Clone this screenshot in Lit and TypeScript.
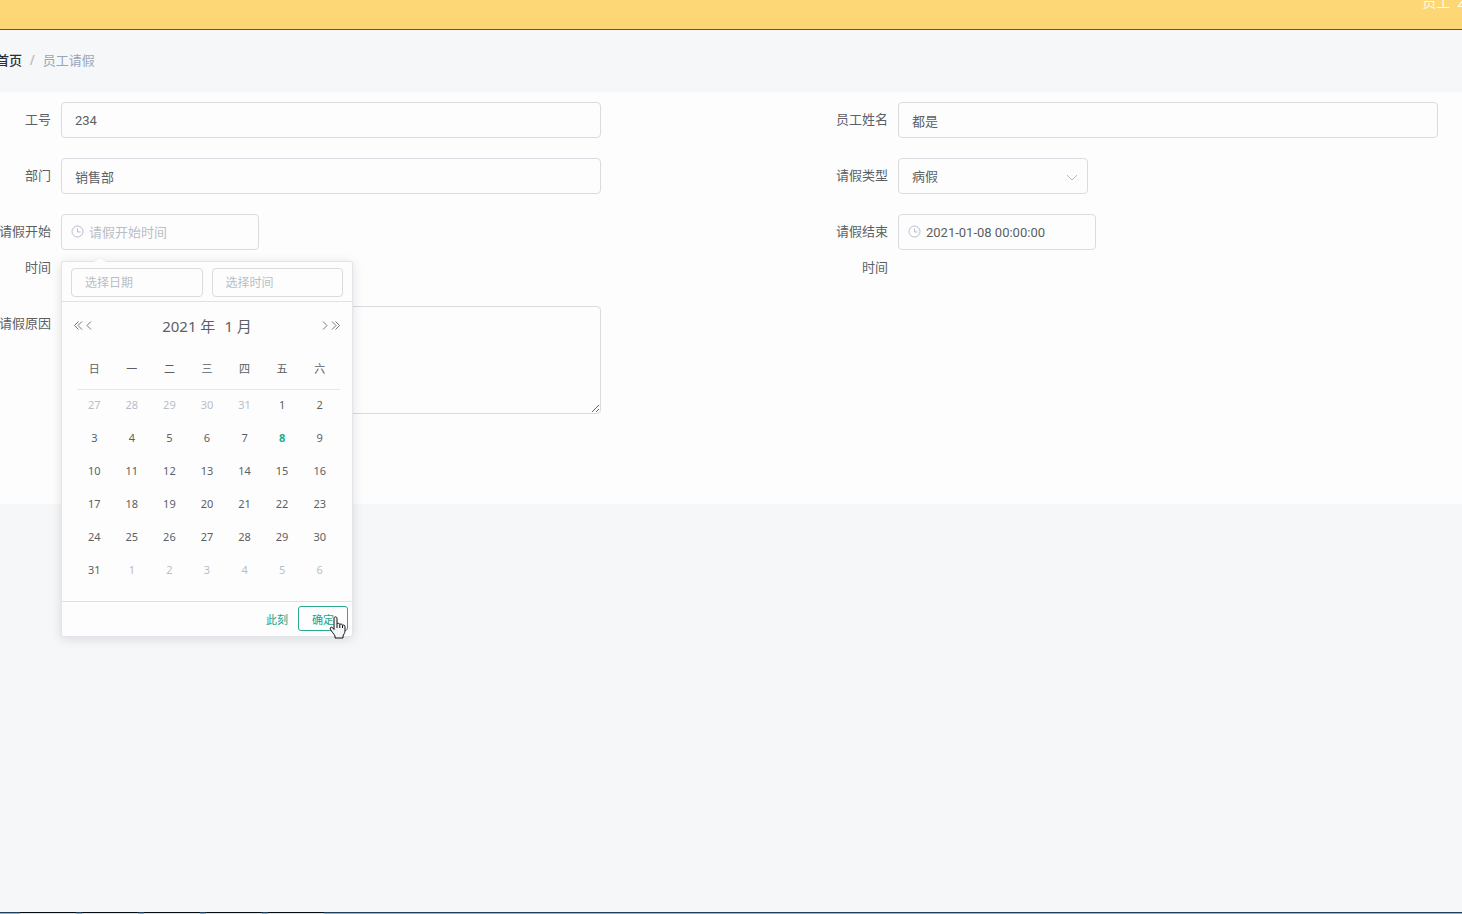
import { LitElement, html, css, svg } from "lit";
import { customElement, state } from "lit/decorators.js";
import { classMap } from "lit/directives/class-map.js";

const clock = svg`<circle cx="6.5" cy="6.5" r="5.5"></circle><path d="M6.5 3.5v3.5h3"></path>`;

const fieldStyles = css`
  * {
    box-sizing: border-box;
  }
  input,
  select,
  textarea,
  button {
    margin: 0;
    font: inherit;
    color: inherit;
  }
  .box {
    display: block;
    width: 100%;
    height: 36px;
    padding: 0 13px;
    border: 1px solid #d9dbe1;
    border-radius: 4px;
    outline: none;
    background: #fdfdfe;
    color: #5c5f63;
  }
  .box::placeholder {
    color: #b9bdc6;
    opacity: 1;
  }
`;

@customElement("date-time-panel")
export class DateTimePanel extends LitElement {
  static styles = [
    fieldStyles,
    css`
      :host {
        display: block;
        width: 292px;
        border: 1px solid #e2e4e9;
        border-radius: 2px;
        background: #fdfdfe;
        box-shadow: 0 2px 12px rgba(0, 0, 0, 0.12);
        font-family: "Noto Sans", "Noto Sans CJK SC", sans-serif;
        color: #5c5f63;
      }
      .arrow {
        position: absolute;
        top: -6px;
        left: 32px;
        width: 12px;
        height: 6px;
        fill: #fdfdfe;
        stroke: #eceef2;
      }
      .head {
        display: grid;
        grid-template-columns: 1fr 1fr;
        gap: 9px;
        padding: 6px 9px 4px;
        border-bottom: 1px solid #dfe1e6;
      }
      .head .box {
        height: 29px;
        font-size: 12px;
      }
      .nav {
        display: flex;
        align-items: center;
        height: 47px;
        padding: 0 10px;
      }
      .nav button {
        padding: 0;
        border: 0;
        background: none;
      }
      .step {
        display: flex;
      }
      .step svg {
        display: block;
        width: 12px;
        height: 12px;
        fill: none;
        stroke: #74777c;
      }
      .title {
        display: flex;
        flex: 1;
        justify-content: center;
        gap: 9px;
        font-size: 15px;
      }
      table {
        width: 263px;
        margin: 0 15px 14px;
        border-collapse: collapse;
        table-layout: fixed;
        font-size: 11px;
        line-height: 16px;
        text-align: center;
      }
      th {
        height: 40px;
        padding: 0 3px 0 0;
        border-bottom: 1px solid #e4e7ec;
        font-weight: 400;
      }
      td {
        height: 33px;
        padding: 0 3px 2px 0;
      }
      td button {
        padding: 0;
        border: 0;
        background: none;
      }
      .other {
        color: #b9bdc6;
      }
      .today {
        color: #20ad8c;
        font-weight: 700;
      }
      .foot {
        display: flex;
        justify-content: flex-end;
        align-items: center;
        gap: 10px;
        padding: 4px 4px 5px;
        border-top: 1px solid #dfe1e6;
        font-size: 11px;
        color: #20a487;
      }
      .foot button {
        height: 25px;
        padding: 0;
        border: 0;
        border-radius: 3px;
        background: none;
      }
      .foot .confirm {
        padding: 0 13px;
        border: 1px solid #2aa98d;
      }
    `,
  ];

  @state() private picked = -1;

  private renderDay(index: number) {
    const offset = index - 5;
    const day = offset < 0 ? 32 + offset : offset < 31 ? offset + 1 : offset - 30;
    const cls = {
      other: offset < 0 || offset > 30,
      today: offset === 7 || index === this.picked,
    };
    return html`<td>
      <button type="button" class=${classMap(cls)} @click=${() => (this.picked = index)}>${day}</button>
    </td>`;
  }

  render() {
    return html`
      <svg class="arrow" viewBox="0 0 12 6"><path d="M0 6 6 1 12 6"></path></svg>
      <div class="head">
        <input class="box" aria-label="选择日期" placeholder="选择日期" />
        <input class="box" aria-label="选择时间" placeholder="选择时间" />
      </div>
      <div class="nav">
        <button type="button" class="step" aria-label="前一年">
          <svg viewBox="0 0 12 12"><path d="M6.5 1.5 2.5 5.5 6.5 9.5M10 1.5 6 5.5 10 9.5"></path></svg>
        </button>
        <button type="button" class="step" aria-label="上个月">
          <svg viewBox="0 0 12 12"><path d="M7 1.5 3 5.5 7 9.5"></path></svg>
        </button>
        <div class="title">
          <button type="button">2021 年</button>
          <button type="button">1 月</button>
        </div>
        <button type="button" class="step" aria-label="下个月">
          <svg viewBox="0 0 12 12"><path d="M5 1.5 9 5.5 5 9.5"></path></svg>
        </button>
        <button type="button" class="step" aria-label="后一年">
          <svg viewBox="0 0 12 12"><path d="M2 1.5 6 5.5 2 9.5M5.5 1.5 9.5 5.5 5.5 9.5"></path></svg>
        </button>
      </div>
      <table>
        <thead>
          <tr>${["日", "一", "二", "三", "四", "五", "六"].map((d) => html`<th scope="col">${d}</th>`)}</tr>
        </thead>
        <tbody>
          ${[0, 1, 2, 3, 4, 5].map(
            (w) => html`<tr>${[0, 1, 2, 3, 4, 5, 6].map((d) => this.renderDay(w * 7 + d))}</tr>`
          )}
        </tbody>
      </table>
      <div class="foot">
        <button type="button">此刻</button>
        <button type="button" class="confirm">确定</button>
      </div>
    `;
  }
}

@customElement("app-root")
export class AppRoot extends LitElement {
  static styles = [
    fieldStyles,
    css`
      :host {
        display: flex;
        flex-direction: column;
        min-height: 100vh;
        overflow: hidden;
        background: #f5f7f9;
        font-family: Roboto, "Noto Sans CJK SC", sans-serif;
        font-size: 13px;
        color: #5c5f63;
      }
      .topbar {
        display: flex;
        justify-content: flex-end;
        height: 30px;
        overflow: hidden;
        border-bottom: 1px solid #62572f;
        background: #fdd676;
      }
      .user {
        margin: -8px -3px 0 0;
        font-size: 14px;
        line-height: 20px;
        white-space: pre;
        color: #fffbe9;
      }
      .crumbs {
        display: flex;
        align-items: center;
        gap: 8px;
        height: 62px;
        margin-left: -4px;
        padding-bottom: 4px;
        color: #98a5bb;
      }
      .crumbs a {
        color: #2b2e33;
        font-weight: 500;
        text-decoration: none;
      }
      .slash {
        color: #b9bdc6;
        font-weight: 700;
      }
      form {
        display: grid;
        grid-template-columns: 1fr 1fr;
        gap: 20px 235px;
        margin-left: -1px;
        padding: 10px 24px 90px 0;
        background: #fdfdfe;
      }
      .item {
        display: grid;
        grid-template-columns: 52px 1fr;
        gap: 10px;
        align-items: start;
      }
      label {
        line-height: 36px;
        text-align: right;
      }
      .control {
        position: relative;
      }
      .select {
        width: 190px;
      }
      .date {
        width: 198px;
      }
      select.box {
        appearance: none;
      }
      .date .box {
        padding-left: 27px;
      }
      .glyph {
        position: absolute;
        fill: none;
        stroke: #b9bdc6;
        pointer-events: none;
      }
      .clock {
        top: 11px;
        left: 10px;
        width: 13px;
        height: 13px;
      }
      .chevron {
        top: 16px;
        right: 10px;
        width: 12px;
        height: 7px;
      }
      textarea.box {
        height: 108px;
        padding: 6px 13px;
        resize: vertical;
      }
      date-time-panel {
        position: absolute;
        top: calc(100% + 11px);
        left: 0;
        z-index: 2;
      }
      .pointer {
        position: absolute;
        top: 402px;
        left: 268px;
        z-index: 3;
        width: 17px;
        height: 23px;
      }
      .taskbar {
        display: flex;
        gap: 6px;
        height: 2px;
        margin-top: auto;
        padding-left: 20px;
        border-top: 1px solid #263f59;
        background: #93b1cb;
      }
      .task {
        width: 56px;
        height: 2px;
        margin-top: -1px;
        border-top: 1px solid #080d13;
        background: #dce4ea;
      }
    `,
  ];

  render() {
    return html`
      <header class="topbar"><div class="user">员工  2</div></header>
      <nav class="crumbs">
        <a href="#home">首页</a><span class="slash">/</span><span>员工请假</span>
      </nav>
      <form @submit=${(e: Event) => e.preventDefault()}>
        <div class="item">
          <label for="no">工号</label>
          <div class="control"><input id="no" class="box" .value=${"234"} /></div>
        </div>
        <div class="item">
          <label for="name">员工姓名</label>
          <div class="control"><input id="name" class="box" .value=${"都是"} /></div>
        </div>
        <div class="item">
          <label for="dept">部门</label>
          <div class="control"><input id="dept" class="box" .value=${"销售部"} /></div>
        </div>
        <div class="item">
          <label for="type">请假类型</label>
          <div class="control select">
            <select id="type" class="box"><option>病假</option></select>
            <svg class="glyph chevron" viewBox="0 0 12 7"><path d="M1 1 6 6 11 1"></path></svg>
          </div>
        </div>
        <div class="item">
          <label for="start">请假开始时间</label>
          <div class="control date">
            <input id="start" class="box" placeholder="请假开始时间" />
            <svg class="glyph clock" viewBox="0 0 13 13">${clock}</svg>
            <date-time-panel></date-time-panel>
            <svg class="pointer" viewBox="0 0 17 23">
              <path
                d="M5 13.5V2.5C5 .3 8 .3 8 2.5V8c.5-1.2 2.8-.9 2.8.6.6-1 2.7-.7 2.7.8.8-.7 2.5-.3 2.5 1.2V15c0 2-1.5 3.5-2 5v2H6v-2c-1-2-3.5-4.5-4.6-6.8-.8-1.7 1-2.7 2.2-1.5z"
                fill="#f4f5f6"
                stroke="#111"
              ></path>
              <path d="M8 8v4M10.8 8.6V12M13.5 9.5V12" fill="none" stroke="#111"></path>
            </svg>
          </div>
        </div>
        <div class="item">
          <label for="end">请假结束时间</label>
          <div class="control date">
            <input id="end" class="box" .value=${"2021-01-08 00:00:00"} />
            <svg class="glyph clock" viewBox="0 0 13 13">${clock}</svg>
          </div>
        </div>
        <div class="item">
          <label for="reason">请假原因</label>
          <div class="control"><textarea id="reason" class="box"></textarea></div>
        </div>
      </form>
      <footer class="taskbar">${[0, 1, 2, 3, 4].map(() => html`<span class="task"></span>`)}</footer>
    `;
  }
}
